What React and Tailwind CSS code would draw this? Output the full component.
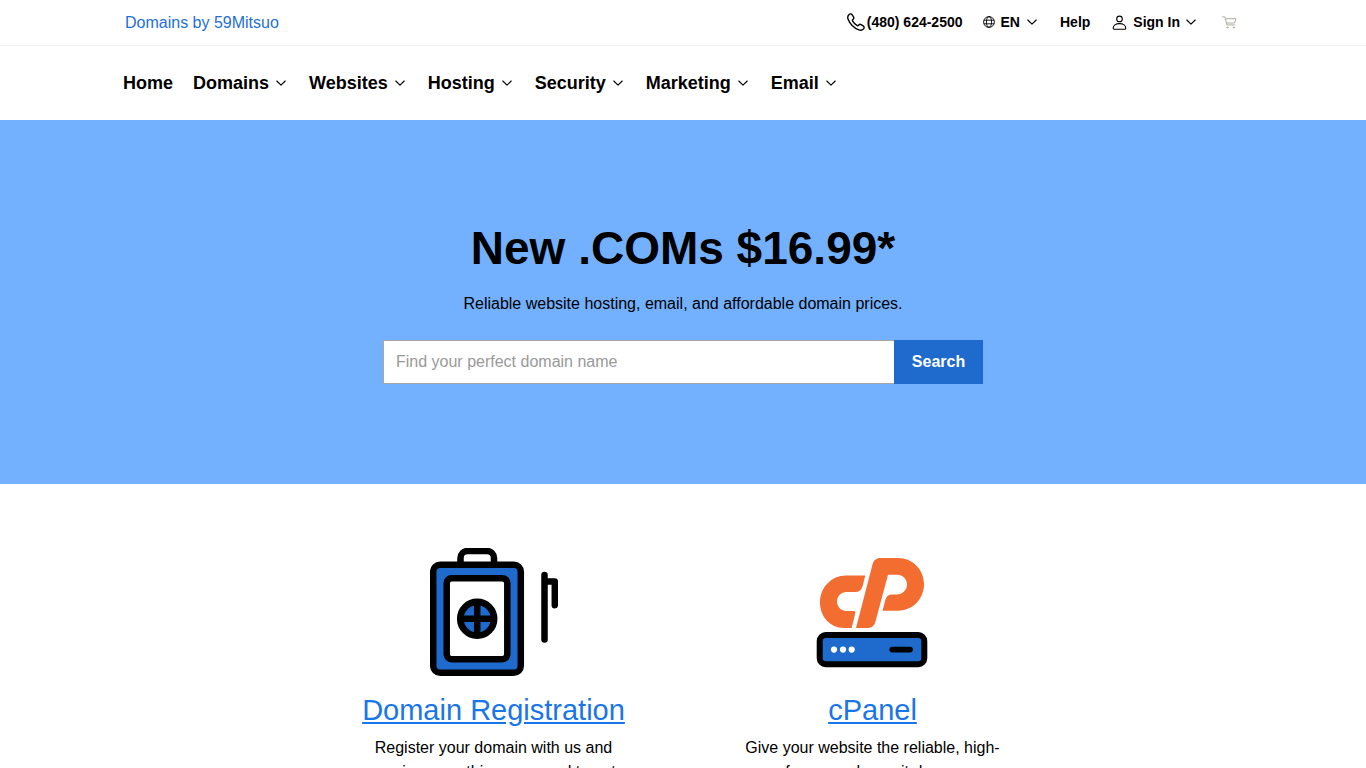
import React, { useState } from 'react';

const NAV_ITEMS = [
    { label: 'Home', menu: false },
    { label: 'Domains', menu: true },
    { label: 'Websites', menu: true },
    { label: 'Hosting', menu: true },
    { label: 'Security', menu: true },
    { label: 'Marketing', menu: true },
    { label: 'Email', menu: true },
];

const ChevronIcon = () => (
    <svg viewBox="0 0 10 10" className="w-[10px] h-[10px] shrink-0" fill="none" stroke="currentColor" strokeWidth="1.1" strokeLinecap="round" strokeLinejoin="round" aria-hidden="true">
        <path d="M0.8 3 5 7.2 9.2 3" />
    </svg>
);

const PhoneIcon = () => (
    <svg viewBox="0 0 18 18" className="w-[18px] h-[18px] shrink-0" fill="none" stroke="currentColor" strokeWidth="1.4" strokeLinejoin="round" aria-hidden="true">
        <path d="M2.1 1.5C3 .6 4.500 .7 5.200 1.800L6.500 3.900C7 4.700 6.800 5.600 6.100 6.200C5.300 6.800 5.200 7.400 5.700 8.200C6.800 10 8.200 11.400 9.900 12.400C10.700 12.900 11.300 12.700 11.800 12C12.400 11.300 13.300 11.100 14.100 11.600L16.200 12.900C17.300 13.600 17.400 15 16.600 15.900C15.400 17.200 13.700 17.600 11.900 16.900C7 15 3 11 1.100 6.200C.4 4.400 .8 2.700 2.100 1.500Z" />
    </svg>
);

const GlobeIcon = () => (
    <svg viewBox="0 0 12 12" className="w-3 h-3 shrink-0" fill="none" stroke="currentColor" strokeWidth="0.9" aria-hidden="true">
        <circle cx="6" cy="6" r="5.4" />
        <ellipse cx="6" cy="6" rx="2.6" ry="5.4" />
        <path d="M.9 4.2h10.2M.9 7.8h10.2" />
    </svg>
);

const UserIcon = () => (
    <svg viewBox="0 0 15 15" className="w-[15px] h-[15px] shrink-0" fill="none" stroke="currentColor" strokeWidth="1.1" strokeLinejoin="round" aria-hidden="true">
        <circle cx="7.5" cy="3.9" r="2.8" />
        <path d="M7.5 8.600C11.200 8.600 13.800 10.600 13.800 13.200C13.800 13.800 13.400 14.200 12.800 14.200H2.200C1.600 14.200 1.200 13.800 1.200 13.200C1.200 10.600 3.800 8.600 7.500 8.600Z" />
    </svg>
);

const CartIcon = () => (
    <svg viewBox="0 0 15 13" className="w-[15px] h-[13px] shrink-0" fill="none" stroke="currentColor" strokeWidth="1" strokeLinecap="round" strokeLinejoin="round" aria-hidden="true">
        <path d="M.7.9h2.200l2 8h7.600M3.400 2.700h10.600l-1.500 4.300H4.500" />
        <circle cx="5.500" cy="11.500" r=".6" />
        <circle cx="11.800" cy="11.500" r=".6" />
    </svg>
);

const RegistrationArt = () => (
    <svg viewBox="0 0 128 128" className="w-32 h-32" aria-hidden="true">
        <path d="M30.5 17V10a7 7 0 0 1 7-7h19.500a7 7 0 0 1 7 7v7" fill="none" stroke="#000" strokeWidth="6.5" />
        <rect x="3.2" y="16.7" width="87.6" height="108" rx="7" fill="#1e6bcd" stroke="#000" strokeWidth="6.5" />
        <rect x="16.7" y="30.2" width="60.6" height="81" rx="5" fill="#fff" stroke="#000" strokeWidth="6.5" />
        <circle cx="47.2" cy="70.8" r="16.9" fill="#1e6bcd" stroke="#000" strokeWidth="6.7" />
        <path d="M47.2 54v33.500M30.500 70.800H64" stroke="#000" strokeWidth="6.5" />
        <path d="M114.500 27v64.500M114.500 33.500h10.300v23.800" fill="none" stroke="#000" strokeWidth="6.5" strokeLinecap="round" strokeLinejoin="round" />
    </svg>
);

const CPanelArt = () => (
    <svg viewBox="1 0 128 128" className="w-32 h-32" aria-hidden="true">
        {/* logo mark */}
        <g fill="#f36c30">
            <path d="M57.300 27.500 54.500 38.500c-.9 3.500-3.500 5.500-7.200 5.500H38.500c-5.300 0-9.500 4.200-9.500 9.500s4.200 9.500 9.500 9.500h7.500c.9 0 1.500.8 1.300 1.700L43.700 80H36C21.800 80 12 68.300 12 54.500 12 39.500 23.500 27.500 38 27.500Z" />
            <path d="M48 80 64.500 16.500c1.100-4.200 3.800-6.500 8-6.500H90c14.800 0 26 11.700 26 26.300S104.800 62.700 90 62.700H74.500l2.900-11c.9-3.400 3.400-5.300 7-5.300H89c5.500 0 10-4.300 10-9.900s-4.500-9.700-10-9.700h-9L67.500 73.500C66.300 78 63.500 80 59.300 80Z" />
        </g>
        {/* server */}
        <rect x="11.7" y="87" width="104.6" height="29.2" rx="6" fill="#1e6bcd" stroke="#000" strokeWidth="6" />
        <g fill="#fff">
            <circle cx="26" cy="101.6" r="3.1" />
            <circle cx="35" cy="101.6" r="3.1" />
            <circle cx="43.7" cy="101.6" r="3.1" />
        </g>
        <path d="M84.300 101.600h17.700" stroke="#000" strokeWidth="5.8" strokeLinecap="round" />
    </svg>
);

const PRODUCTS = [
    {
        title: 'Domain Registration',
        text: 'Register your domain with us and receive everything you need to get online.',
        Art: RegistrationArt,
    },
    {
        title: 'cPanel',
        text: 'Give your website the reliable, high-performance home it deserves.',
        Art: CPanelArt,
    },
];

/**
 * Thin utility bar: brand, phone, language, account and cart
 */
const TopBar = () => (
    <div className="h-[46px] border-b border-[#f3f3f3]">
        <div className="max-w-[1116px] h-full mx-auto flex items-center justify-between">
            <a href="#home" className="text-base text-[#1e70d8]">Domains by 59Mitsuo</a>
            <div className="flex items-center pb-px text-sm font-bold">
                <a href="tel:4806242500" className="flex items-center gap-[2px]">
                    <PhoneIcon />
                    (480) 624-2500
                </a>
                <button type="button" className="flex items-center gap-[6px] ml-5">
                    <GlobeIcon />
                    <span className="mr-px">EN</span>
                    <ChevronIcon />
                </button>
                <a href="#help" className="ml-[23px]">Help</a>
                <button type="button" className="flex items-center gap-[6px] ml-[22px]">
                    <UserIcon />
                    Sign In
                    <ChevronIcon />
                </button>
                <a href="#cart" aria-label="Cart" className="ml-[26px] mr-1 text-[#b0ab9f]">
                    <CartIcon />
                </a>
            </div>
        </div>
    </div>
);

const MainNav = () => (
    <nav className="h-[74px]">
        <ul className="max-w-[1120px] h-full mx-auto flex items-center gap-5 text-lg font-bold">
            {NAV_ITEMS.map(({ label, menu }) => (
                <li key={label}>
                    {menu ? (
                        <button type="button" className="flex items-center gap-[7px] pr-[3px]">
                            {label}
                            <ChevronIcon />
                        </button>
                    ) : (
                        <a href="#home">{label}</a>
                    )}
                </li>
            ))}
        </ul>
    </nav>
);

const Hero = () => {
    const [query, setQuery] = useState('');

    return (
        <section className="bg-[#73b1ff] flex flex-col items-center pt-[100px] pb-[100px]">
            <h1 className="text-[46px] leading-14 font-bold">New .COMs $16.99*</h1>
            <p className="mt-4 text-base">Reliable website hosting, email, and affordable domain prices.</p>
            <form className="mt-6 w-full max-w-[600px] h-11 flex" onSubmit={(e) => e.preventDefault()}>
                <input
                    type="text"
                    aria-label="Find your perfect domain name"
                    placeholder="Find your perfect domain name"
                    value={query}
                    onChange={(e) => setQuery(e.target.value)}
                    className="flex-1 min-w-0 px-3 bg-white border border-r-0 border-[#a6a6a6] text-base placeholder:text-[#999] outline-none"
                />
                <button type="submit" className="w-[89px] bg-[#1e6bcd] text-white text-base font-bold">
                    Search
                </button>
            </form>
        </section>
    );
};

const App = () => (
    <div className="min-h-screen bg-white text-black font-['Liberation_Sans',Arial,sans-serif]">
        <header>
            <TopBar />
            <MainNav />
        </header>
        <main>
            <Hero />
            <section className="max-w-[758px] mx-auto pt-16 grid grid-cols-2">
                {PRODUCTS.map(({ title, text, Art }) => (
                    <article key={title} className="flex flex-col items-center px-[60px] text-center">
                        <Art />
                        <h2 className="mt-4 text-[29px] leading-9 whitespace-nowrap">
                            <a href="#products" className="text-[#1976e8] underline">{title}</a>
                        </h2>
                        <p className="mt-2 text-base">{text}</p>
                    </article>
                ))}
            </section>
        </main>
    </div>
);

export default App;
